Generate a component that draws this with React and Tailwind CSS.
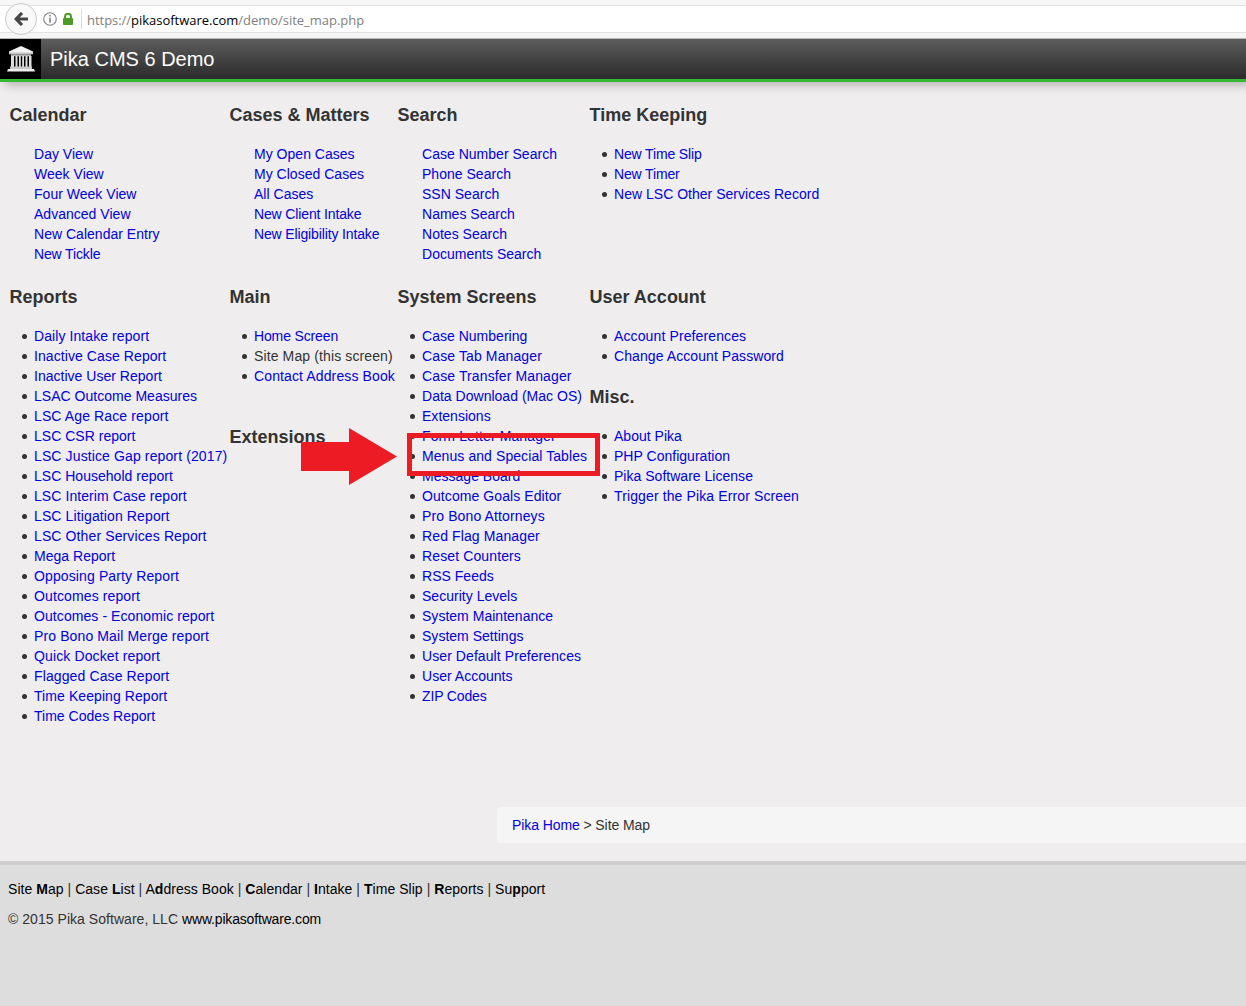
const row1 = [
  { title: 'Calendar', plain: true, items: ['Day View', 'Week View', 'Four Week View', 'Advanced View', 'New Calendar Entry', 'New Tickle'] },
  { title: 'Cases & Matters', plain: true, items: ['My Open Cases', 'My Closed Cases', 'All Cases', 'New Client Intake', 'New Eligibility Intake'] },
  { title: 'Search', plain: true, items: ['Case Number Search', 'Phone Search', 'SSN Search', 'Names Search', 'Notes Search', 'Documents Search'] },
  { title: 'Time Keeping', items: ['New Time Slip', 'New Timer', 'New LSC Other Services Record'] },
];

const row2 = [
  [{ title: 'Reports', items: ['Daily Intake report', 'Inactive Case Report', 'Inactive User Report', 'LSAC Outcome Measures', 'LSC Age Race report', 'LSC CSR report', 'LSC Justice Gap report (2017)', 'LSC Household report', 'LSC Interim Case report', 'LSC Litigation Report', 'LSC Other Services Report', 'Mega Report', 'Opposing Party Report', 'Outcomes report', 'Outcomes - Economic report', 'Pro Bono Mail Merge report', 'Quick Docket report', 'Flagged Case Report', 'Time Keeping Report', 'Time Codes Report'] }],
  [
    { title: 'Main', items: ['Home Screen', 'Site Map (this screen)', 'Contact Address Book'] },
    { title: 'Extensions', items: [] },
  ],
  [{ title: 'System Screens', items: ['Case Numbering', 'Case Tab Manager', 'Case Transfer Manager', 'Data Download (Mac OS)', 'Extensions', 'Form Letter Manager', 'Menus and Special Tables', 'Message Board', 'Outcome Goals Editor', 'Pro Bono Attorneys', 'Red Flag Manager', 'Reset Counters', 'RSS Feeds', 'Security Levels', 'System Maintenance', 'System Settings', 'User Default Preferences', 'User Accounts', 'ZIP Codes'] }],
  [
    { title: 'User Account', items: ['Account Preferences', 'Change Account Password'] },
    { title: 'Misc.', items: ['About Pika', 'PHP Configuration', 'Pika Software License', 'Trigger the Pika Error Screen'] },
  ],
];

const tight = new Set(['New Tickle', 'New Client Intake', 'New Eligibility Intake', 'New Time Slip', 'New Timer', 'Home Screen', 'ZIP Codes']);
const wide = new Set(['LSC Age Race report', 'LSC Justice Gap report (2017)', 'LSC Litigation Report', 'LSC Other Services Report', 'Opposing Party Report', 'Outcomes report', 'Pro Bono Mail Merge report', 'Quick Docket report', 'Flagged Case Report', 'Contact Address Book', 'Site Map (this screen)', 'Case Tab Manager', 'Case Transfer Manager', 'Form Letter Manager', 'Pro Bono Attorneys', 'Red Flag Manager', 'Reset Counters', 'Account Preferences', 'Trigger the Pika Error Screen']);
const medium = new Set(['LSC Interim Case report', 'Outcomes - Economic report', 'Menus and Special Tables', 'User Default Preferences', 'Change Account Password', 'Daily Intake report', 'Inactive Case Report', 'Time Keeping Report', 'Outcome Goals Editor']);

function tracking(item) {
  if (tight.has(item)) return 'tracking-[-0.14px]';
  if (wide.has(item)) return 'tracking-[0.12px]';
  if (medium.has(item)) return 'tracking-[0.08px]';
  return 'tracking-[0.02px]';
}

function Section({ title, items, plain }) {
  return (
    <section>
      <h4 className="pl-[0.5px] text-[18px] leading-5 font-bold">{title}</h4>
      <ul className="mt-[19px] pl-[25px]">
        {items.map((item) => (
          <li key={item} className={`relative h-5 ${tracking(item)}`}>
            {!plain && <span className="absolute top-[8px] left-[-12px] size-[5px] rounded-full bg-[#333]" />}
            {item.startsWith('Site Map') ? item : <a className="text-[#0000dd]">{item}</a>}
          </li>
        ))}
      </ul>
    </section>
  );
}

function BrowserBar() {
  return (
    <div className="relative z-10 flex h-[39px] shrink-0 items-start border-b border-[#b4b9b4] bg-[#f6f6f6] pt-[5px]">
      <div className="relative flex h-[28px] w-full items-center border-y border-[#e2e2e2] bg-white">
        <div className="absolute -top-[3px] left-[5px] flex size-8 items-center justify-center rounded-full border border-[#c9c9c9] bg-[#f9f9f9]">
          <svg width="14" height="14" viewBox="0 0 14 14" fill="none" stroke="#474747" strokeWidth="3.2">
            <path d="M8 1 2.200 7 8 13M2.500 7H14" />
          </svg>
        </div>
        <svg className="ml-[43px]" width="14" height="14" viewBox="0 0 14 14">
          <circle cx="7" cy="7" r="6.300" fill="none" stroke="#808080" strokeWidth="1.1" />
          <path d="M6.200 3h1.600v1.600H6.200zM6.200 5.800h1.600v5H6.200z" fill="#808080" />
        </svg>
        <svg className="ml-[6px]" width="10" height="12" viewBox="0 0 10 12">
          <path d="M2 6V3.700a3 3 0 0 1 6 0V6" fill="none" stroke="#4c9b24" strokeWidth="2" />
          <rect y="5" width="10" height="7" rx="0.8" fill="#4c9b24" />
        </svg>
        <div className="ml-[8px] h-5 w-px bg-[#d9d9d9]" />
        <div className="mt-[2px] ml-[5px] font-['Open_Sans',sans-serif] text-[13px] leading-5 tracking-[-0.03px] whitespace-nowrap text-[#808080]">
          https://<span className="text-black">pikasoftware.com</span>/demo/site_map.php
        </div>
      </div>
    </div>
  );
}

function Logo() {
  return (
    <div className="flex h-10 w-[41px] items-center justify-center bg-black">
      <svg width="28" height="26" viewBox="0 0 28 26" fill="#dedede">
        <path d="M14 0 26 5.500v2.500H2V5.500z" fill="#f2f2f2" />
        <path d="M2 6.500h24v1.800H2z" fill="#c4c4c4" />
        <path d="M4 8.300h20v2H4z" fill="#b5b5b5" />
        <path d="M4 10h3v11H4zM8.500 10h2v11h-2zM12 10h1.800v11H12zM15.200 10H17v11h-1.800zM18.500 10h2v11h-2zM22 10h2.500v11H22z" />
        <path d="M3 20.500h22V23H3z" fill="#c8c8c8" />
        <path d="M1 23h26l1 2.500H0z" fill="#ededed" />
      </svg>
    </div>
  );
}

const footerLinks = [
  ['Site ', 'M', 'ap'], ['Case ', 'L', 'ist'], ['A', 'd', 'dress Book'], ['', 'C', 'alendar'],
  ['', 'I', 'ntake'], ['', 'T', 'ime Slip'], ['', 'R', 'eports'], ['Su', 'p', 'port'],
];

export default function App() {
  return (
    <div className="flex h-[1006px] w-[1246px] flex-col overflow-hidden bg-[#efeded] font-['Liberation_Sans',Arial,sans-serif] text-[14px] leading-5 whitespace-nowrap text-[#333]">
      <BrowserBar />
      <header className="flex h-[43px] shrink-0 border-b-[3px] border-[#37b834] bg-linear-to-b from-[#5d5d5d] to-[#2b2b2b] shadow-[5px_3px_9px_rgba(0,0,0,0.25)]">
        <Logo />
        <h1 className="ml-[9px] text-[20px] leading-10 text-white">Pika CMS 6 Demo</h1>
      </header>
      <main className="flex h-[779px] shrink-0 flex-col pt-[23px]">
        <div className="grid h-[182px] shrink-0 grid-cols-[220px_168px_192px_1fr] pl-[9px]">
          {row1.map((s) => <Section key={s.title} {...s} />)}
        </div>
        <div className="relative grid h-[520px] shrink-0 grid-cols-[220px_168px_192px_1fr] pl-[9px]">
          {row2.map((col, i) => (
            <div key={i} className={i === 1 ? 'flex flex-col gap-[41px]' : 'flex flex-col gap-[21px]'}>
              {col.map((s) => <Section key={s.title} {...s} />)}
            </div>
          ))}
          <svg className="absolute top-[141px] left-[301px]" width="97" height="58" viewBox="0 0 97 58">
            <path d="M0 14h48V0l48 28.500L48 57V43H0z" fill="#ed1c24" />
          </svg>
          <div className="absolute top-[146px] left-[407px] h-[43px] w-[193px] border-[5px] border-[#ed1c24]" />
        </div>
        <div className="ml-[497px] h-9 rounded-l bg-[#f5f5f5] px-[15px] py-2 tracking-[-0.09px]">
          <a className="text-[#0000dd]">Pika Home</a> &gt; Site Map
        </div>
      </main>
      <footer className="flex-1 border-t-4 border-[#cfcfcf] bg-[#ddd] px-2 pt-[14px]">
        <p className="tracking-[0.04px] text-black">
          {footerLinks.map(([a, b, c], i) => (
            <span key={i}>{i > 0 && <span className="text-[#333]"> | </span>}{a}<b>{b}</b>{c}</span>
          ))}
        </p>
        <p className="mt-[10px]">
          <span className="tracking-[0.04px]">© 2015 Pika Software, LLC </span>
          <a className="tracking-[-0.17px] text-black">www.pikasoftware.com</a>
        </p>
      </footer>
    </div>
  );
}
